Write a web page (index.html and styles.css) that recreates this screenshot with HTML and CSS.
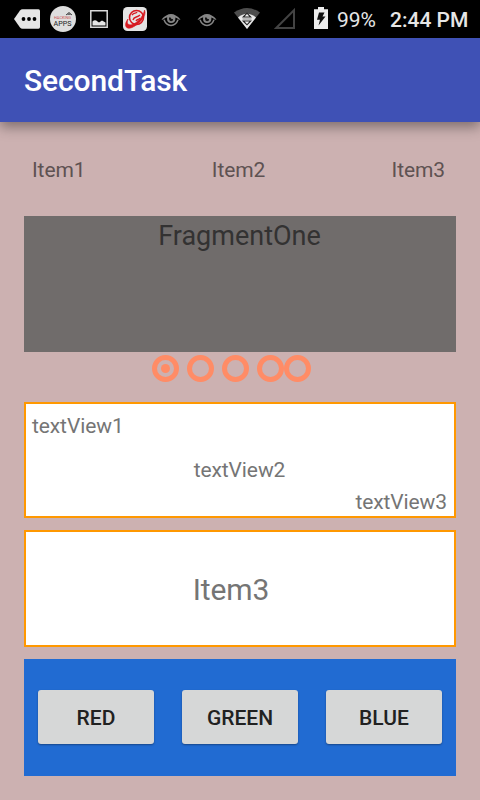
FILE: index.html
```html
<!DOCTYPE html>
<html lang="en">
<head>
<meta charset="utf-8">
<title>SecondTask</title>
<link rel="stylesheet" href="styles.css">
</head>
<body>
<header class="status">
  <svg class="tag" width="26" height="20" viewBox="0 0 26 20"><path d="M0 10 6 1.500Q7 .3 8.500.3H24.500Q26 .3 26 2V18Q26 19.700 24.500 19.700H8.500Q7 19.700 6 18.500Z" fill="#e6e6e6"/><g fill="#000"><circle cx="9.500" cy="10" r="1.900"/><circle cx="15" cy="10" r="1.900"/><circle cx="20.500" cy="10" r="1.900"/></g></svg>
  <svg class="apps" width="26" height="28" viewBox="0 0 26 28"><circle cx="13" cy="14" r="13" fill="#dedede"/><path d="m16 10 3-2.500 3 2.500M18 10v-1h2v1" fill="none" stroke="#444"/><text x="4" y="13.500" class="tiny" textLength="17" lengthAdjust="spacingAndGlyphs">HACKING</text><text x="3.500" y="21.300" class="apps-text" textLength="18" lengthAdjust="spacingAndGlyphs">APPS</text></svg>
  <svg class="photo" width="18" height="18" viewBox="0 0 18 18"><path d="M.8.8h16.400v16.400H.8z" fill="none" stroke="#d9d9d9" stroke-width="1.500"/><path d="M2.500 15.500v-4Q5 9 7.500 11.500L9 12.500 12 10.500 15.500 12.500v3z" fill="#e6e6e6"/></svg>
  <svg class="orbit" width="24" height="24" viewBox="0 0 24 24"><rect width="24" height="24" rx="4.500" fill="#e4e4e4"/><g fill="none" stroke="#d71920"><circle cx="13.500" cy="10.500" r="7" stroke-width="1.600"/><path d="M21.500 3.200C24 8 17 17 9 20.500 2.500 23.200.6 17.500 5 12c-2.500 6 2 7.500 7 4.300 5-3.200 9-9 9.500-13.100Z" fill="#d71920" stroke-width=".7"/><path d="M9 8c2-3 4-1 5-3m-4 8c1-4 4-2 7-5m-4 6c1-2 3-1 4-3" stroke-width="1.400"/></g></svg>
  <svg class="eye1" width="20" height="14" viewBox="0 0 20 14"><g id="eye"><path d="M.5 6.500Q10-4.500 19.500 6.500L18 6.800Q16 5 14.300 4.500 15 10 10 10 5.300 9.800 6.200 4.300 3.500 5 2 6.800Z" fill="#858585"/><path d="M3 6.800Q5 12.200 10 12.500 15 12.200 17 6.800" fill="none" stroke="#858585" stroke-width="1.500"/><path d="M8 4.500Q7.800 8.200 10.200 8.300 12.300 8.200 12 6 10 6.500 9.600 4.500Z" fill="#111"/></g></svg>
  <svg class="eye2" width="20" height="14" viewBox="0 0 20 14"><use href="#eye"/></svg>
  <svg class="wifi" width="26" height="21" viewBox="0 0 26 21"><path d="M0 4.500Q13-4.500 26 4.500L13 21Z" fill="#4d4d4d"/><path d="M4 9.500Q13 2 22 9.500L13 21Z" fill="#e8e8e8"/><path d="M9.300 9 13 5.200 16.700 9ZM9.300 13 13 16.800 16.700 13Z" fill="#eee" stroke="#222" stroke-width="1.100"/><path d="M8.500 11h9" stroke="#888"/></svg>
  <svg class="signal" width="21" height="21" viewBox="0 0 21 21"><path d="M2.200 20H20V2.200Z" fill="none" stroke="#434343" stroke-width="2"/></svg>
  <svg class="battery" width="14" height="22" viewBox="0 0 14 22"><path d="M0 2.200h4V0h6v2.200h4V22H0Z" fill="#ededed"/><path d="M5 5.500H10.500L8.500 9.500H11.500L4.500 18.500 6 12.800H3Z" fill="#111"/></svg>
  <span class="percent">99%</span>
  <span class="clock">2:44 PM</span>
</header>
<div class="toolbar"><h1>SecondTask</h1></div>
<main>
  <nav><span>Item1</span><span>Item2</span><span>Item3</span></nav>
  <section class="fragment">FragmentOne</section>
  <div class="dots"><i class="dot on"></i><i class="dot"></i><i class="dot"></i><i class="dot"></i><i class="dot last"></i></div>
  <section class="box texts"><span class="t1">textView1</span><span class="t2">textView2</span><span class="t3">textView3</span></section>
  <section class="box item">Item3</section>
  <section class="buttons"><button>RED</button><button>GREEN</button><button>BLUE</button></section>
</main>
</body>
</html>
```
FILE: styles.css
```css
* { box-sizing: border-box; }
body {
  margin: 0;
  height: 800px;
  overflow: hidden;
  background: #ccb1b1;
  font-family: Roboto, sans-serif;
  font-size: 21px;
  line-height: 28px;
  letter-spacing: -.1px;
  color: #757575;
}
.status {
  display: flex;
  align-items: center;
  height: 38px;
  padding-left: 14px;
  background: #000;
  color: #e6e6e6;
  letter-spacing: 0;
  white-space: nowrap;
}
.status > * { flex: none; }
.apps { margin-left: 10px; }
.photo { margin-left: 14px; }
.orbit { margin-left: 15px; }
.eye1 { margin-left: 14px; }
.eye2 { margin-left: 16px; }
.wifi { margin-left: 17px; }
.signal { margin-left: 14px; }
.eye1, .eye2 { margin-top: 1px; }
.wifi, .signal { margin-bottom: 1px; }
.battery { margin-left: 19px; margin-bottom: 2px; }
.tiny { font-size: 3.5px; fill: #c55; }
.apps-text { font-size: 7.5px; fill: #222; }
.percent { margin-left: 9px; width: 40px; margin-top: 2px; }
.clock { margin-left: 13px; margin-top: 2px; font-weight: 500; }
.toolbar {
  display: flex;
  align-items: center;
  height: 84px;
  padding: 2px 24px 0;
  background: #3f51b5;
  box-shadow: 0 5px 12px rgba(0, 0, 0, .38);
}
h1 {
  margin: 0;
  font-size: 30px;
  font-weight: 500;
  line-height: 36px;
  color: #fff;
}
main { padding: 34px 24px 0; }
nav {
  display: flex;
  justify-content: space-between;
  height: 60px;
  padding: 0 11px 0 8px;
  color: #5e5252;
}
.fragment {
  height: 136px;
  padding: 2px 1px 0 0;
  background: #706c6b;
  color: #333232;
  font-size: 27px;
  line-height: 36px;
  letter-spacing: 0;
  text-align: center;
}
.dots {
  display: flex;
  gap: 8px;
  height: 50px;
  padding: 3px 0 0 128px;
}
.dot {
  display: grid;
  place-items: center;
  width: 27px;
  height: 27px;
  border: 5px solid #ff8c66;
  border-radius: 50%;
}
.dot.last { margin-left: -8px; }
.dot.on::before {
  content: "";
  width: 9px;
  height: 9px;
  border-radius: 50%;
  background: #ff8c66;
}
.box {
  border: 2px solid #ff9800;
  background: #fff;
}
.texts {
  display: flex;
  flex-direction: column;
  height: 116px;
  padding: 8px 7px 0 6px;
}
.t2 { align-self: center; margin-top: 16px; }
.t3 { align-self: flex-end; margin-top: 4px; }
.item {
  display: flex;
  align-items: center;
  justify-content: center;
  height: 117px;
  margin: 12px 0;
  padding: 3px 18px 0 0;
  font-size: 30px;
}
.buttons {
  display: flex;
  justify-content: space-between;
  height: 117px;
  padding: 31px 14px 0;
  background: #216bd2;
}
button {
  width: 116px;
  height: 54px;
  padding: 2px 0 0;
  border: 0;
  border-radius: 3px;
  background: #d6d7d7;
  box-shadow: 0 1px 2px rgba(0, 0, 0, .35);
  font: 500 21px/28px Roboto, sans-serif;
  color: #212121;
}
```
